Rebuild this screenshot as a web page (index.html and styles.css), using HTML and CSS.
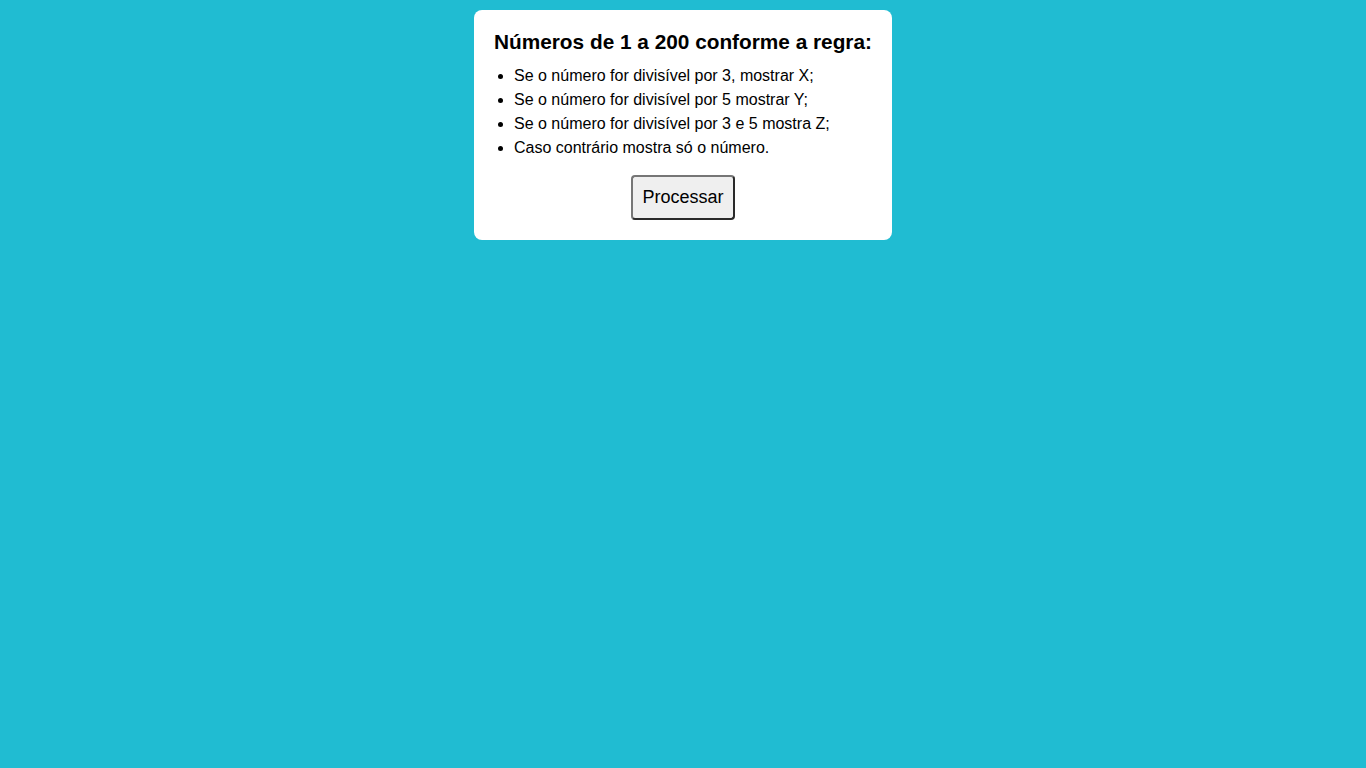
FILE: index.html
```html
<!DOCTYPE html>
<html lang="pt-BR">
<head>
<meta charset="utf-8">
<title>Números de 1 a 200</title>
<link rel="stylesheet" href="styles.css">
</head>
<body>
<main class="card">
  <h2 class="title">Números de 1 a 200 conforme a regra:</h2>
  <ul class="rules">
    <li>Se o número for divisível por 3, mostrar X;</li>
    <li>Se o número for divisível por 5 mostrar Y;</li>
    <li>Se o número for divisível por 3 e 5 mostra Z;</li>
    <li>Caso contrário mostra só o número.</li>
  </ul>
  <div class="actions">
    <button class="btn" type="button">Processar</button>
  </div>
</main>
</body>
</html>
```

FILE: styles.css
```css
html, body {
  margin: 0;
  padding: 0;
}
body {
  background: #20bcd2;
  font-family: "Liberation Sans", Arial, sans-serif;
  color: #000;
  min-height: 100vh;
  padding-top: 10px;
  box-sizing: border-box;
  display: flex;
  flex-direction: column;
  align-items: center;
}
.card {
  width: 418px;
  box-sizing: border-box;
  background: #fff;
  border-radius: 8px;
  padding: 20px 20px 20px;
}
.title {
  margin: 0 0 10px;
  font-size: 20.8px;
  font-weight: bold;
  line-height: 24px;
  white-space: nowrap;
}
.rules {
  margin: 0;
  padding-left: 20px;
  font-size: 16px;
  line-height: 24px;
}
.actions {
  display: flex;
  justify-content: center;
  margin-top: 15px;
}
.btn {
  font-family: "Liberation Sans", Arial, sans-serif;
  font-size: 18px;
  line-height: 21px;
  padding: 10px 9px;
  background: #efefef;
  color: #000;
  border: 2px solid #333;
  border-color: #767676 #2a2a2a #2a2a2a #767676;
  border-radius: 4px;
}
```
